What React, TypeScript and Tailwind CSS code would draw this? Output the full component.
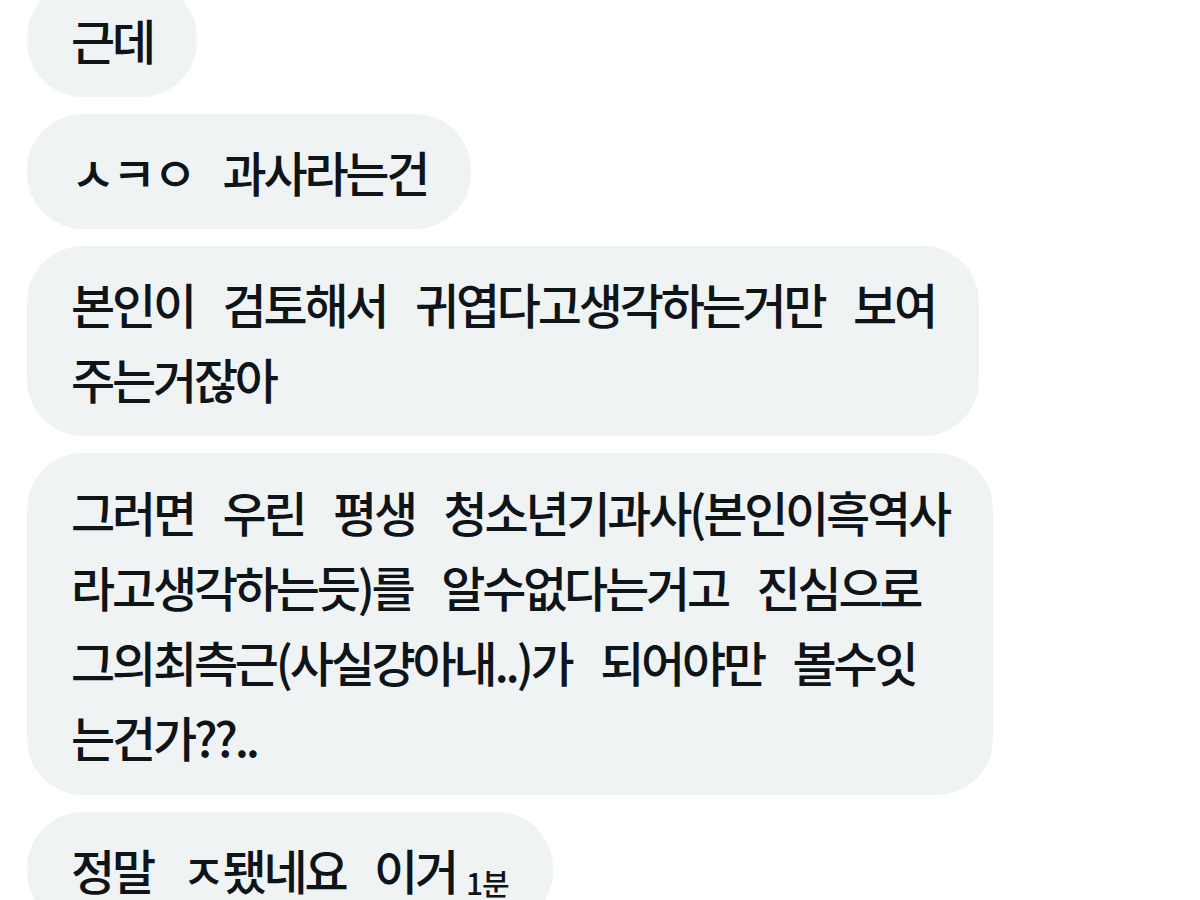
const bubble =
  "w-fit rounded-[56px] bg-[#eff3f4] px-[44px] py-[20px] text-[48px] leading-[75px] tracking-[-3.2px] [word-spacing:21px] text-[#0f1419] font-medium whitespace-nowrap";

export default function App() {
  return (
    <div className="h-[900px] overflow-hidden bg-white font-['Noto_Sans_CJK_KR','Noto_Sans',sans-serif]">
      <div className="mt-[-18px] flex flex-col items-start gap-[17px] pl-[27px]">
        <div className={bubble}>근데</div>
        <div className={bubble}>ㅅㅋㅇ 과사라는건</div>
        <div className={bubble}>
          본인이 검토해서 귀엽다고생각하는거만 보여
          <br />
          주는거잖아
        </div>
        <div className={`${bubble} !py-[21px]`}>
          그러면 우린 평생 청소년기과사(본인이흑역사
          <br />
          라고생각하는듯)를 알수없다는거고 진심으로
          <br />
          그의최측근(사실걍아내..)가 되어야만 볼수잇
          <br />
          는건가??..
        </div>
        <div className={bubble}>
          정말 ㅈ됐네요 이거
          <span className="ml-[10px] align-[-5px] text-[30px] leading-none tracking-[-1px]">1분</span>
        </div>
      </div>
    </div>
  );
}
